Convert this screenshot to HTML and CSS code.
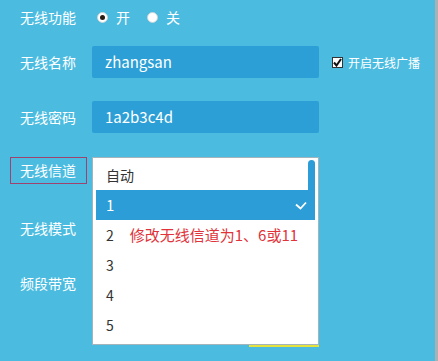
FILE: index.html
```html
<!DOCTYPE html>
<html lang="zh-CN">
<head>
<meta charset="utf-8">
<link rel="stylesheet" href="styles.css">
</head>
<body>
<div class="page">
  <div class="form">
    <div class="row r1">
      <span class="label">无线功能</span>
      <span class="radio"><span class="dot on"></span>开</span>
      <span class="radio second"><span class="dot"></span>关</span>
    </div>
    <div class="row r2">
      <span class="label">无线名称</span>
      <div class="input">zhangsan</div>
      <span class="check"><span class="box"><svg width="9" height="9" viewBox="0 0 9 9"><path d="M1 4.5 L3.5 7.5 L8 1" fill="none" stroke="#111" stroke-width="2"/></svg></span>开启无线广播</span>
    </div>
    <div class="row r3">
      <span class="label">无线密码</span>
      <div class="input">1a2b3c4d</div>
    </div>
    <div class="row r4">
      <span class="label boxed">无线信道</span>
    </div>
    <div class="row r5">
      <span class="label">无线模式</span>
    </div>
    <div class="row r6">
      <span class="label">频段带宽</span>
    </div>
  </div>
  <div class="focus-ring"></div>
  <div class="dropdown">
    <div class="scroll"></div>
    <div class="opt">自动</div>
    <div class="opt sel">1<svg class="tick" width="12" height="9" viewBox="0 0 12 9"><path d="M1 3.5 L5.5 7.5 L11 1.5" fill="none" stroke="#fff" stroke-width="1.8"/></svg></div>
    <div class="opt">2<span class="note">修改无线信道为1、6或11</span></div>
    <div class="opt">3</div>
    <div class="opt">4</div>
    <div class="opt">5</div>
  </div>
</div>
</body>
</html>
```

FILE: styles.css
```css
* { box-sizing: border-box; }
html, body { margin: 0; padding: 0; }
body {
  width: 438px;
  height: 361px;
  overflow: hidden;
  font-family: "Noto Sans CJK SC", "Noto Sans", sans-serif;
}
.page {
  position: relative;
  width: 438px;
  height: 361px;
  background: #4bbce0;
  border-right: 3px solid #a9b1b5;
}
.form { display: flex; flex-direction: column; }
.row { display: flex; align-items: center; }
.r1 { height: 34px; }
.r2 { margin-top: 12px; height: 32px; }
.r3 { margin-top: 23px; height: 32px; }
.r4 { margin-top: 24px; height: 27px; }
.r5 { margin-top: 29px; height: 30px; }
.r6 { margin-top: 25px; height: 30px; }
.label {
  flex: 0 0 92px;
  padding-left: 20px;
  color: #fff;
  font-size: 14px;
  line-height: 20px;
}
.label.boxed {
  flex: 0 0 77px;
  margin-left: 10px;
  margin-right: 5px;
  padding-left: 9px;
  height: 27px;
  line-height: 25px;
  border: 1px solid #a0426e;
}
.radio {
  display: flex;
  align-items: center;
  color: #fff;
  font-size: 14px;
  margin-left: 5px;
}
.radio.second { margin-left: 17px; }
.dot {
  width: 11px;
  height: 11px;
  border-radius: 50%;
  background: #fff;
  border: 1px solid #c9d3d8;
  margin-right: 8px;
  position: relative;
}
.dot.on::after {
  content: "";
  position: absolute;
  left: 2px;
  top: 2px;
  width: 5px;
  height: 5px;
  border-radius: 50%;
  background: #2a1a14;
}
.input {
  width: 227px;
  height: 32px;
  background: #2c9fd6;
  border-radius: 2px;
  color: #fff;
  font-size: 15px;
  line-height: 32px;
  padding-left: 13px;
}
.check {
  display: flex;
  align-items: center;
  margin-left: 13px;
  color: #fff;
  font-size: 12px;
}
.box {
  width: 11px;
  height: 11px;
  background: #fff;
  border: 1px solid #333;
  margin-right: 5px;
  display: flex;
  align-items: center;
  justify-content: center;
}
.focus-ring {
  position: absolute;
  left: 249px;
  top: 327px;
  width: 70px;
  height: 20px;
  border-right: 1px solid #e4e23c;
  border-bottom: 2px solid #e4e23c;
}
.dropdown {
  position: absolute;
  left: 92px;
  top: 157px;
  width: 227px;
  height: 188px;
  background: #fff;
  border: 1px solid #a4b4bc;
  padding: 2px 3px 4px 3px;
}
.scroll {
  position: absolute;
  right: 3px;
  top: 2px;
  width: 7px;
  height: 60px;
  background: #2c9dd6;
  border-radius: 4px 4px 0 0;
}
.opt {
  height: 30px;
  line-height: 30px;
  padding-left: 10px;
  font-size: 14px;
  color: #333;
  display: flex;
  align-items: center;
}
.opt.sel {
  background: #2c9dd6;
  color: #fff;
  font-size: 15px;
  position: relative;
}
.tick { margin-left: auto; margin-right: 8px; }
.note {
  margin-left: 16px;
  color: #e0333a;
  font-size: 15px;
}
```
